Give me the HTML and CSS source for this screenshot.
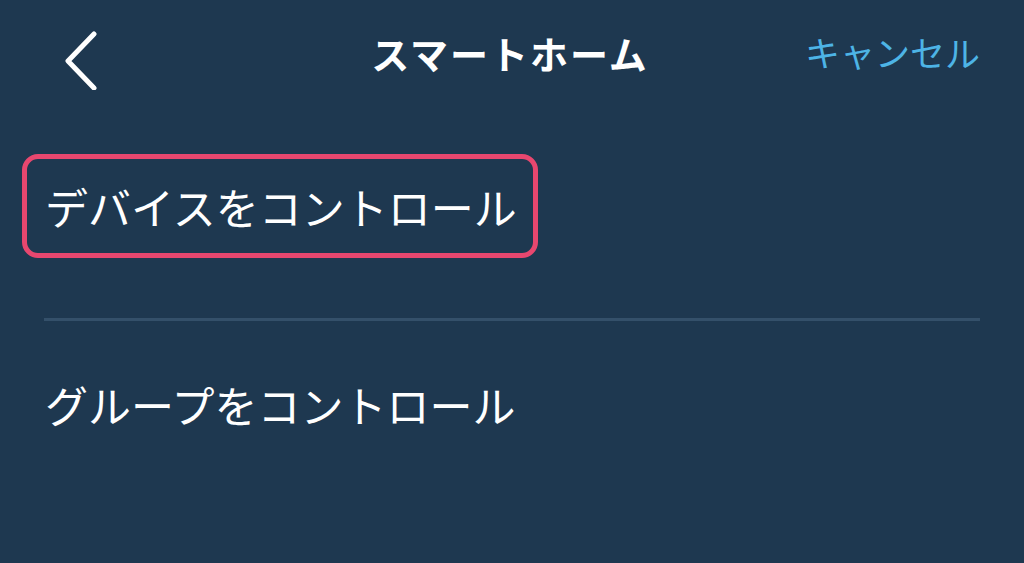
FILE: index.html
```html
<!DOCTYPE html>
<html lang="ja">
<head>
<meta charset="utf-8">
<link rel="stylesheet" href="styles.css">
</head>
<body>
<div class="screen">
  <header class="nav">
    <div class="nav-left">
      <svg class="back" width="40" height="60" viewBox="0 0 40 60" aria-hidden="true">
        <polyline points="32,4 6,31 32,58" fill="none" stroke="#ffffff" stroke-width="5" stroke-linecap="round" stroke-linejoin="round"/>
      </svg>
    </div>
    <h1 class="title">スマートホーム</h1>
    <div class="nav-right"><span class="cancel">キャンセル</span></div>
  </header>
  <main class="list">
    <div class="row row-first">
      <span class="highlight">デバイスをコントロール</span>
    </div>
    <div class="divider"></div>
    <div class="row row-second">
      <span class="label">グループをコントロール</span>
    </div>
  </main>
</div>
</body>
</html>
```

FILE: styles.css
```css
html, body {
  margin: 0;
  padding: 0;
}
body {
  background: #1e3850;
  font-family: "Noto Sans CJK JP", "Noto Sans", sans-serif;
  color: #ffffff;
  width: 1024px;
  height: 563px;
  overflow: hidden;
}
.screen {
  width: 1024px;
  height: 563px;
}
.nav {
  height: 106px;
  display: grid;
  grid-template-columns: 1fr auto 1fr;
  align-items: center;
  padding: 0 46px 0 62px;
}
.nav-left {
  display: flex;
  align-items: center;
}
.back {
  display: block;
  margin-top: 14px;
}
.title {
  margin: 0 20px 0 0;
  font-size: 38px;
  font-weight: 700;
  letter-spacing: 2px;
  line-height: 1;
}
.nav-right {
  display: flex;
  justify-content: flex-end;
}
.cancel {
  color: #4db4e6;
  font-size: 35px;
  font-weight: 400;
  line-height: 1;
  margin-right: -2px;
  margin-bottom: 4px;
}
.list {
  padding: 48px 44px 0 22px;
}
.row-first {
  display: flex;
}
.highlight {
  display: flex;
  align-items: center;
  height: 94px;
  padding: 0 16px 0 18px;
  border: 5px solid #e8476f;
  border-radius: 16px;
  font-size: 43px;
  font-weight: 400;
  line-height: 1;
  white-space: nowrap;
}
.divider {
  margin: 60px 0 0 22px;
  height: 3px;
  background: #34506a;
}
.row-second {
  padding: 62px 0 0 23px;
}
.label {
  font-size: 43px;
  font-weight: 400;
  line-height: 1;
  white-space: nowrap;
}
```
